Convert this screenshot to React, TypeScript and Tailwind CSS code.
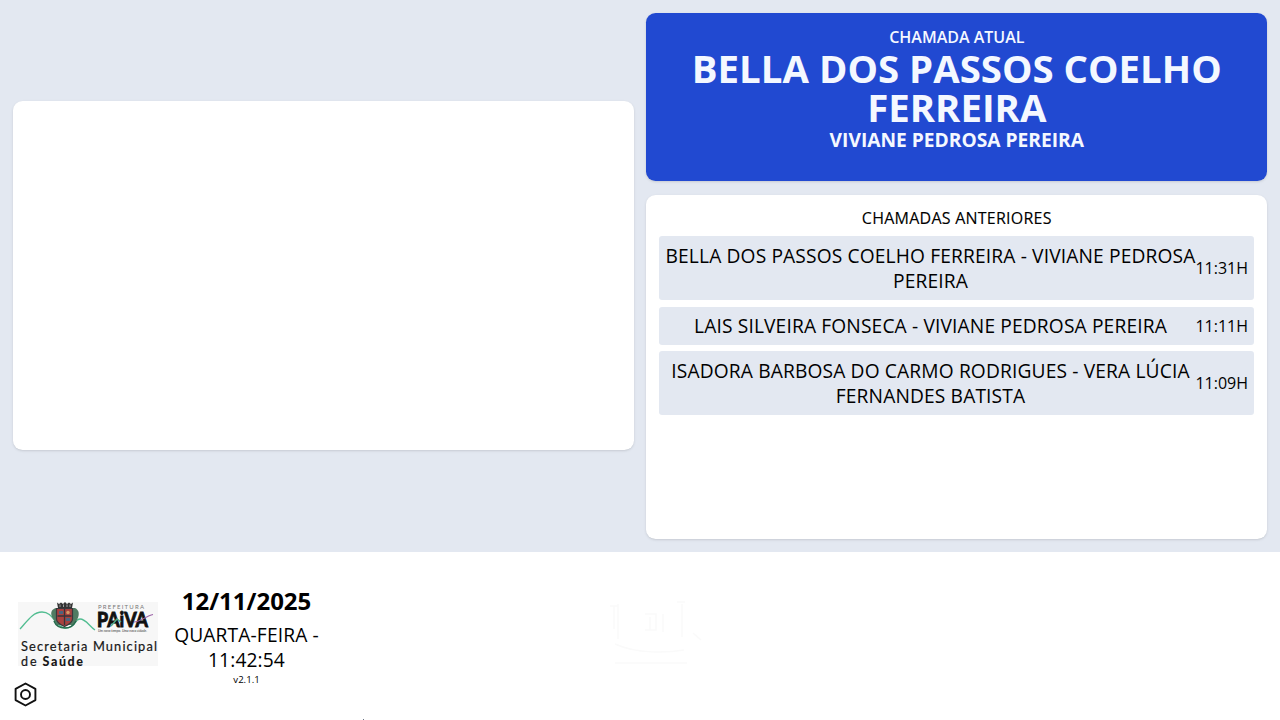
import React from 'react'

type Call = {
  name: string
  time: string
}

const currentCall = {
  patient: 'BELLA DOS PASSOS COELHO FERREIRA',
  professional: 'VIVIANE PEDROSA PEREIRA',
}

const previousCalls: Call[] = [
  { name: 'BELLA DOS PASSOS COELHO FERREIRA - VIVIANE PEDROSA PEREIRA', time: '11:31H' },
  { name: 'LAIS SILVEIRA FONSECA - VIVIANE PEDROSA PEREIRA', time: '11:11H' },
  { name: 'ISADORA BARBOSA DO CARMO RODRIGUES - VERA LÚCIA FERNANDES BATISTA', time: '11:09H' },
]

function CityLogo() {
  return (
    <svg width="140" height="66" viewBox="0 0 140 66" className="shrink-0 overflow-visible" aria-label="Secretaria Municipal de Saúde">
      <rect width="140" height="64" fill="#f7f7f7" />
      {/* hills */}
      <path d="M2 27C8 21 14 10 24 10C36 10 37 26 48 26C58 26 56 17 62 17C68 17 71 24 77 28" fill="none" stroke="#52bd91" strokeWidth="1.3" />
      {/* coat of arms */}
      <path d="M34 15C32 10 34 7 38 6L57 6C61 8 62 12 59 18L55 23L39 23Z" fill="#507b62" />
      <path d="M39 0.5L41 2L43 0.5L45 2L47 0L49 2L51 0.5L53 2L55 0.5L54 6H40Z" fill="#333" />
      <path d="M42 2.5V5M45.5 2.5V5M49 2.5V5M52 2.5V5" stroke="#bbb" strokeWidth="0.8" />
      <path d="M38.5 6.5H54.5V17C54.5 21 50 23 46.500 24.500C43 23 38.500 21 38.500 17Z" fill="#a9413f" stroke="#39383d" strokeWidth="1.2" />
      <path d="M39.500 14H53.500M46.500 7V23" stroke="#34343b" strokeWidth="1.3" />
      <path d="M41 9H45V12H41ZM48 16H52V19H48Z" fill="#4b6480" />
      <circle cx="50" cy="10.500" r="1.700" fill="#d19a68" />
      <path d="M36 19C38 24 43 26 47 26C52 26 56 23 58 19" fill="none" stroke="#276b4d" strokeWidth="1.600" />
      <text x="80" y="6.800" textLength="46" fontFamily="Lato, sans-serif" fontSize="6" fill="#777">PREFEITURA</text>
      <text x="79" y="24.500" textLength="51" lengthAdjust="spacingAndGlyphs" fontFamily="Lato, sans-serif" fontWeight="900" fontSize="20" fill="#111" stroke="#111" strokeWidth="0.800">PAiVA</text>
      <path d="M93 24L99 17L103 20" fill="none" stroke="#4caa88" strokeWidth="1.500" />
      <path d="M116 20C122 20 128 14 135 12.500" fill="none" stroke="#9c64a8" strokeWidth="1.100" />
      <text x="80" y="30" textLength="49" lengthAdjust="spacingAndGlyphs" fontFamily="Lato, sans-serif" fontStyle="italic" fontSize="4.500" fill="#333">Um novo tempo. Uma nova cidade.</text>
      <text x="3" y="48.500" textLength="136" fontFamily="Lato, sans-serif" fontSize="12.800" fill="#171717" stroke="#171717" strokeWidth="0.200">Secretaria Municipal</text>
      <text x="3" y="63.500" textLength="15.500" fontFamily="Lato, sans-serif" fontSize="12.500" fill="#171717" stroke="#171717" strokeWidth="0.200">de</text>
      <text x="24.500" y="63.500" textLength="40.500" fontFamily="Lato, sans-serif" fontWeight="900" fontSize="12.500" fill="#171717">Saúde</text>
    </svg>
  )
}

function SettingsIcon() {
  return (
    <svg width="25" height="25" viewBox="0 0 25 25" fill="none" stroke="#111" strokeWidth="1.900" strokeLinejoin="round">
      <path d="M12.500 1.500L22.400 6.900V18.100L12.500 23.500L2.600 18.100V6.900Z" />
      <circle cx="12.500" cy="12.500" r="4.500" />
    </svg>
  )
}

// barely visible mark in the middle of the footer
function Watermark() {
  return (
    <svg width="100" height="70" viewBox="0 0 100 70" fill="none" stroke="#fafafa" strokeWidth="1.500">
      <path d="M9 5V40M73 5V38M54 15V33M68 3H76M1 7H9M5 7V30" />
      <path d="M6 45C28 55 58 54 75 51M84 34L92 41" />
      <path d="M36 15H47V31H36M41 18V31" />
      <path d="M6 64H78" />
    </svg>
  )
}

export default function App() {
  return (
    <main className="flex h-screen w-full flex-col overflow-hidden bg-white font-['Open_Sans','Noto_Sans',sans-serif] text-black">
      <section className="grid h-[552px] shrink-0 grid-cols-2 gap-[12.8px] bg-[#e3e8f1] p-[12.8px]">
        {/* video */}
        <div className="flex items-center pb-[0.6px]">
          <div className="aspect-video w-full rounded-[9.6px] bg-white shadow-sm" />
        </div>

        <div className="flex min-h-0 flex-col gap-[13.4px]">
          <div className="flex h-[168.400px] shrink-0 flex-col items-center rounded-[9.6px] bg-[#2149d1] px-[12.8px] pt-[12.8px] text-center text-[#f4f8ff] shadow-sm">
            <h2 className="text-[16px] leading-[22px] font-semibold">CHAMADA ATUAL</h2>
            <h1 className="mt-[1.4px] text-[38.4px] leading-[39px] font-bold">{currentCall.patient}</h1>
            <p className="text-[19.2px] leading-[26px] font-bold">{currentCall.professional}</p>
          </div>

          <div className="flex min-h-0 flex-1 flex-col rounded-[9.6px] bg-white p-[12.8px] shadow-sm">
            <h2 className="text-center text-[16px] leading-[22px] font-medium tracking-[0.24px] [-webkit-text-stroke:0.12px_black]">CHAMADAS ANTERIORES</h2>
            <div className="mt-[6.800px] flex flex-col gap-[6.4px]">
              {previousCalls.map((call) => (
                <div key={call.time} className="flex items-center rounded-[3.2px] bg-[#e3e8f1] p-[6.4px]">
                  <p className="-mx-[3px] flex-1 text-center text-[19.2px] leading-[25.6px] tracking-[0.135px]">{call.name}</p>
                  <span className="text-[16px] leading-[22px]">{call.time}</span>
                </div>
              ))}
            </div>
          </div>
        </div>
      </section>

      <footer className="grid flex-1 grid-cols-[340px_1fr] bg-white">
        <div className="flex flex-col">
          <div className="flex h-[134px] items-end">
            <div className="pb-[18px] pl-[18px]">
              <CityLogo />
            </div>
            <div className="flex w-[177px] flex-col items-center text-center">
              <strong className="text-[24px] leading-[32px] font-bold">12/11/2025</strong>
              <span className="mt-[4.600px] px-3 text-[19.2px] leading-[25.6px] tracking-[0.13px]">QUARTA-FEIRA - 11:42:54</span>
              <small className="text-[9.6px] leading-[13px]">v2.1.1</small>
            </div>
          </div>
          <button className="-mt-1 ml-[13px] w-[25px]" aria-label="Configurações">
            <SettingsIcon />
          </button>
        </div>
        <div className="flex flex-col justify-between pt-[47px]">
          <div className="pl-[269px]">
            <Watermark />
          </div>
          <div className="ml-[23px] h-px w-px bg-gray-500" />
        </div>
      </footer>
    </main>
  )
}
